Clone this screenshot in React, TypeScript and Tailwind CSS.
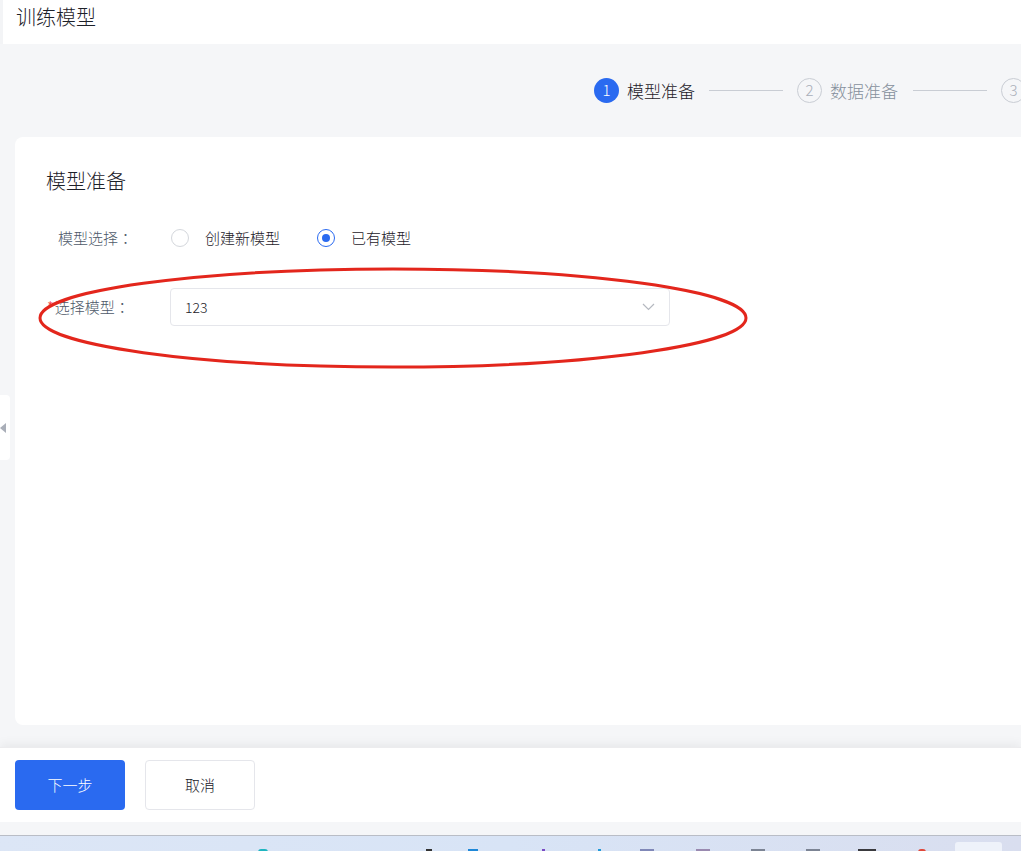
import React, { useState } from "react";

const font = { fontFamily: '"Noto Sans CJK SC", "Noto Sans", sans-serif' };

const Step: React.FC<{ n: number; label?: string; active?: boolean }> = ({ n, label, active }) => (
  <div className="flex items-center shrink-0">
    <div
      className={
        active
          ? "w-[25px] h-[25px] rounded-full bg-[#2a6af0] text-white flex items-center justify-center text-[15px]"
          : "w-[25px] h-[25px] rounded-full border border-[#c9cdd4] text-[#a9aeb8] flex items-center justify-center text-[15px]"
      }
    >
      {n}
    </div>
    {label && (
      <span className={active ? "ml-2 text-[17px] text-[#1d2129]" : "ml-2 text-[17px] text-[#86909c]"}>
        {label}
      </span>
    )}
  </div>
);

const Radio: React.FC<{ checked: boolean; label: string; onClick: () => void }> = ({
  checked,
  label,
  onClick,
}) => (
  <button className="flex items-center focus:outline-none" onClick={onClick}>
    <span
      className={
        checked
          ? "w-[18px] h-[18px] rounded-full border border-[#2a6af0] flex items-center justify-center"
          : "w-[18px] h-[18px] rounded-full border border-[#d4d7dc] flex items-center justify-center"
      }
    >
      {checked && <span className="w-[8px] h-[8px] rounded-full bg-[#2a6af0]" />}
    </span>
    <span className="ml-4 text-[15px] text-[#1d2129]">{label}</span>
  </button>
);

// full-width colon, centred like the original UI font
const Colon = () => <span className="font-['Noto_Sans_CJK_TC',sans-serif]">：</span>;

export default function App() {
  const [mode, setMode] = useState<"new" | "exist">("exist");

  return (
    <div className="relative h-[851px] w-full overflow-hidden flex flex-col bg-[#f5f6f8] font-light" style={font}>
      {/* header */}
      <div className="h-[44px] shrink-0 bg-white border-l-[3px] border-[#f3f4f6] pl-[13px] pt-[4px]">
        <span className="text-[20px] leading-[26px] text-[#1d2129]">训练模型</span>
      </div>

      {/* main */}
      <div className="flex-1 flex flex-col pl-[15px] pb-[22px] overflow-hidden">
        {/* steps */}
        <div className="h-[93px] flex items-center pl-[579px] whitespace-nowrap overflow-hidden">
          <Step n={1} label="模型准备" active />
          <div className="ml-[14px] w-[74px] h-px bg-[#c9cdd4] shrink-0" />
          <div className="ml-[14px]">
            <Step n={2} label="数据准备" />
          </div>
          <div className="ml-[15px] w-[74px] h-px bg-[#c9cdd4] shrink-0" />
          <div className="ml-[14px]">
            <Step n={3} />
          </div>
        </div>

        {/* card */}
        <div className="flex-1 bg-white rounded-l-[8px] pt-[30px]">
          <div className="pl-[31px] text-[20px] leading-[28px] text-[#1d2129]">模型准备</div>

          <div className="mt-[27px] h-[32px] flex items-center">
            <span className="pl-[43px] w-[156px] text-[15px] text-[#4e5969]">
              模型选择
              <Colon />
            </span>
            <Radio checked={mode === "new"} label="创建新模型" onClick={() => setMode("new")} />
            <div className="ml-[37px]">
              <Radio checked={mode === "exist"} label="已有模型" onClick={() => setMode("exist")} />
            </div>
          </div>

          <div className="mt-[34px] flex items-center">
            <span className="pl-[32px] w-[155px] text-[15px] text-[#4e5969]">
              <span className="text-[#f53f3f] mr-[1px]">*</span>选择模型
              <Colon />
            </span>
            <div className="w-[500px] h-[38px] border border-[#e5e6eb] rounded-[4px] flex items-center justify-between pl-[14px] pr-[14px]">
              <span className="text-[14px] text-[#1d2129]">123</span>
              <svg width="13" height="8" viewBox="0 0 13 8" fill="none">
                <path d="M1 1l5.5 5.5L12 1" stroke="#b5b9c0" strokeWidth="1.2" />
              </svg>
            </div>
          </div>
        </div>
      </div>

      {/* footer */}
      <div className="h-[75px] shrink-0 bg-white shadow-[0_-3px_10px_rgba(0,0,0,0.06)] border-t border-[#ececee] flex items-start pt-[12px] pl-[15px] gap-[20px]">
        <button className="w-[110px] h-[50px] rounded-[4px] bg-[#2a6af0] text-white text-[15px]">下一步</button>
        <button className="w-[110px] h-[50px] rounded-[4px] border border-[#e5e6eb] bg-white text-[#1d2129] text-[15px]">
          取消
        </button>
      </div>
      <div className="h-[13px] shrink-0 bg-[#f5f6f8]" />

      {/* taskbar */}
      <div className="relative h-[16px] shrink-0 border-t border-[#b9bdc6] bg-gradient-to-r from-[#dce6f6] via-[#d8e4f6] to-[#d9deef]">
        <div className="absolute top-[13px] left-[258px] w-[10px] h-[3px] rounded-t bg-[#1fb5c0]" />
        <div className="absolute top-[13px] left-[426px] w-[6px] h-[3px] bg-[#333]" />
        <div className="absolute top-[13px] left-[468px] w-[10px] h-[3px] bg-[#1e88d8]" />
        <div className="absolute top-[13px] left-[542px] w-[3px] h-[3px] bg-[#7a4bc4]" />
        <div className="absolute top-[13px] left-[598px] w-[3px] h-[3px] bg-[#1e9ad8]" />
        <div className="absolute top-[13px] left-[640px] w-[14px] h-[3px] bg-[#8088b8]" />
        <div className="absolute top-[13px] left-[696px] w-[14px] h-[3px] bg-[#9a8ab0]" />
        <div className="absolute top-[13px] left-[751px] w-[14px] h-[3px] bg-[#7c8494]" />
        <div className="absolute top-[13px] left-[806px] w-[14px] h-[3px] bg-[#7c8494]" />
        <div className="absolute top-[13px] left-[858px] w-[18px] h-[3px] bg-[#3a3a3e]" />
        <div className="absolute top-[13px] left-[918px] w-[8px] h-[3px] rounded-t bg-[#e0483a]" />
        <div className="absolute top-[6px] left-[955px] w-[47px] h-[10px] rounded-t-[3px] bg-[#eef2fa]" />
      </div>

      {/* collapse handle */}
      <div className="absolute left-0 top-[395px] w-[10px] h-[65px] bg-white rounded-r-[4px] flex items-center">
        <svg width="6" height="10" viewBox="0 0 6 10">
          <path d="M6 0L0 5l6 5z" fill="#a9aeb8" />
        </svg>
      </div>

      {/* red annotation */}
      <svg className="absolute left-0 top-0 pointer-events-none" width="1021" height="851">
        <ellipse cx="393" cy="318" rx="353" ry="49" fill="none" stroke="#e3261c" strokeWidth="3" />
      </svg>
    </div>
  );
}
